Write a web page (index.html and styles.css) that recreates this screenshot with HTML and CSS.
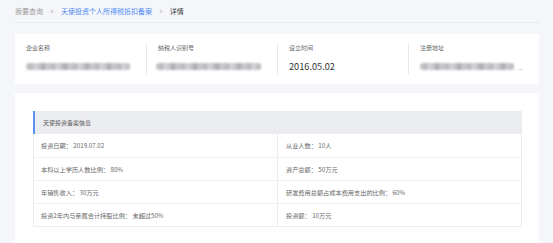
FILE: index.html
```html
<!DOCTYPE html>
<html lang="zh-CN">
<head>
  <meta charset="UTF-8" />
  <title>详情</title>
  <link rel="stylesheet" href="styles.css">
</head>
<body>
  <div class="crumb">
    <span class="crumb-item">我要查询</span>
    <span class="crumb-sep">&gt;</span>
    <span class="crumb-item link">天使投资个人所得税抵扣备案</span>
    <span class="crumb-sep">&gt;</span>
    <span class="crumb-item current">详情</span>
  </div>

  <section class="summary">
    <div class="field">
      <div class="field-label">企业名称</div>
      <div class="field-value"><span class="masked w1"></span></div>
    </div>
    <div class="field">
      <div class="field-label">纳税人识别号</div>
      <div class="field-value"><span class="masked w2"></span></div>
    </div>
    <div class="field">
      <div class="field-label">设立时间</div>
      <div class="field-value date">2016.05.02</div>
    </div>
    <div class="field">
      <div class="field-label">注册地址</div>
      <div class="field-value"><span class="masked w3"></span><span class="more">...</span></div>
    </div>
  </section>

  <section class="detail">
    <div class="info-table">
      <div class="info-head">天使投资备案信息</div>
      <div class="info-row">
        <div class="cell">投资日期： 2019.07.02</div>
        <div class="cell">从业人数： 10人</div>
      </div>
      <div class="info-row">
        <div class="cell">本科以上学历人数比例： 80%</div>
        <div class="cell">资产总额： 50万元</div>
      </div>
      <div class="info-row">
        <div class="cell">年销售收入： 30万元</div>
        <div class="cell">研发费用总额占成本费用支出的比例： 60%</div>
      </div>
      <div class="info-row">
        <div class="cell">投资2年内与亲属合计持股比例： 未超过50%</div>
        <div class="cell">投资额： 10万元</div>
      </div>
    </div>
  </section>
</body>
</html>
```

FILE: styles.css
```css
* {
  box-sizing: border-box;
  margin: 0;
  padding: 0;
}
body {
  font-family: "Noto Sans CJK SC", "Noto Sans", sans-serif;
  background: #f5f6fa;
  color: #333;
  padding: 0 14px 0 15px;
  height: 243px;
  overflow: hidden;
}

/* Breadcrumb */
.crumb {
  height: 23px;
  display: flex;
  align-items: center;
  font-size: 7px;
  color: #999;
  border-bottom: 1px solid #e9eaef;
  padding-bottom: 1px;
}
.crumb-sep {
  margin: 0 7px;
  color: #aaa;
  transform: scaleX(0.8);
}
.crumb-item.link {
  color: #4d8cf5;
}
.crumb-item.current {
  color: #444;
}

/* Summary card */
.summary {
  margin-top: 11px;
  height: 50px;
  background: #fff;
  display: grid;
  grid-template-columns: repeat(4, 131px);
}
.field {
  margin-top: 10px;
  height: 30px;
  padding-left: 11px;
}
.field + .field {
  border-left: 1px solid #e8e8ec;
}
.field-label {
  font-size: 6px;
  line-height: 8px;
  color: #666;
  margin-top: 0;
}
.field-value {
  margin-top: 8px;
  height: 12px;
  display: flex;
  align-items: center;
}
.field-value.date {
  font-size: 9.2px;
  color: #333;
}
.masked {
  display: block;
  height: 7px;
  border-radius: 3px;
  background: repeating-linear-gradient(90deg, #c9c9cc 0, #b9b9bd 6px, #d6d6d9 9px, #c2c2c6 14px, #a9a9ad 17px, #d0d0d4 22px);
  filter: blur(1.2px);
}
.masked.w1 { width: 104px; }
.masked.w2 { width: 105px; margin-left: -2px; }
.masked.w3 { width: 94px; }
.more {
  font-size: 6px;
  color: #888;
  margin-left: 4px;
  margin-top: 2px;
}

/* Detail card */
.detail {
  margin-top: 9px;
  background: #fff;
  height: 160px;
  padding: 18px 17px 0 18px;
}
.info-table {
  border: 1px solid #ececef;
  border-top: none;
  font-size: 6.2px;
  color: #666;
}
.info-head {
  height: 23px;
  background: #ebecf0;
  border-left: 2px solid #5b93f5;
  margin-left: -1px;
  display: flex;
  align-items: center;
  padding-left: 8px;
  color: #555;
  font-size: 6px;
}
.info-row {
  display: grid;
  grid-template-columns: 243px 1fr;
  height: 23px;
}
.info-row + .info-row {
  border-top: 1px solid #f0f0f2;
}
.cell {
  display: flex;
  align-items: center;
  padding-left: 7px;
  white-space: nowrap;
}
.cell + .cell {
  border-left: 1px solid #ececef;
  padding-left: 8px;
}
```
